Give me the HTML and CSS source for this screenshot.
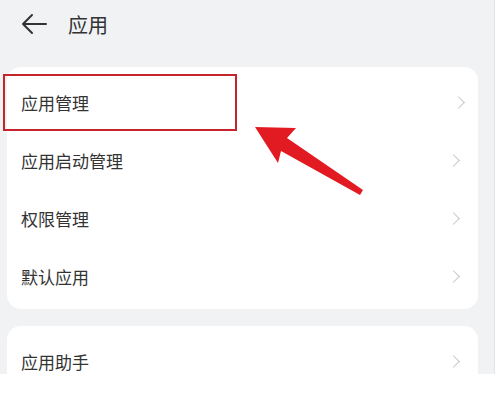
FILE: index.html
```html
<!DOCTYPE html>
<html lang="zh-CN">
<head>
    <meta charset="UTF-8">
    <meta name="viewport" content="width=device-width, initial-scale=1.0">
    <title>应用</title>
    <link rel="stylesheet" href="styles.css">
</head>
<body>

<div class="screen">
    <div class="header">
        <svg class="back" width="26" height="22" viewBox="0 0 26 22">
            <path d="M25 11H2M11 2L2 11l9 9" fill="none" stroke="#333" stroke-width="2" stroke-linecap="round" stroke-linejoin="round"/>
        </svg>
        <span class="title">应用</span>
    </div>

    <div class="card">
        <div class="row highlight">
            <span>应用管理</span>
            <span class="chevron"></span>
        </div>
        <div class="row">
            <span>应用启动管理</span>
            <span class="chevron"></span>
        </div>
        <div class="row">
            <span>权限管理</span>
            <span class="chevron"></span>
        </div>
        <div class="row">
            <span>默认应用</span>
            <span class="chevron"></span>
        </div>
    </div>

    <div class="card second">
        <div class="row">
            <span>应用助手</span>
            <span class="chevron"></span>
        </div>
    </div>

    <!-- annotation arrow drawn over the list -->
    <svg class="pointer" width="120" height="80" viewBox="0 0 120 80">
        <polygon points="5,7 46,8 37,18 113,70 110,75 31,31 28,43" fill="#e21b23"/>
    </svg>
</div>

</body>
</html>
```

FILE: styles.css
```css
body {
    margin: 0;
    background-color: #fff;
    font-family: "Noto Sans CJK SC", "Noto Sans", sans-serif;
}

.screen {
    position: relative;
    width: 494px;
    height: 374px;
    background-color: #f1f2f4;
    border-right: 1px solid #e3e5e8;
    overflow: hidden;
}

.header {
    display: flex;
    align-items: center;
    height: 48px;
    padding-left: 21px;
}

.back {
    margin-right: 21px;
}

.title {
    font-size: 20px;
    color: #333;
}

.card {
    background-color: #fff;
    border-radius: 14px;
    margin: 19px 16px 0 7px;
    padding: 7px 0 4px;
}

.card.second {
    margin-top: 17px;
    padding-top: 6px;
}

.row {
    display: flex;
    align-items: center;
    justify-content: space-between;
    height: 58px;
    padding: 0 16px 0 14px;
    font-size: 17px;
    color: #333;
    box-sizing: border-box;
}

.row.highlight {
    margin-left: -4px;
    padding-left: 16px;
    width: 234px;
    height: 57px;
    border: 2px solid #c4252d;
    overflow: visible;
    position: relative;
}

.row.highlight .chevron {
    position: absolute;
    left: 449px;
}

.chevron {
    width: 8px;
    height: 8px;
    border-top: 1.5px solid #c6c6c6;
    border-right: 1.5px solid #c6c6c6;
    transform: rotate(45deg);
    margin-right: 4px;
}

.pointer {
    position: absolute;
    left: 250px;
    top: 120px;
}
```
